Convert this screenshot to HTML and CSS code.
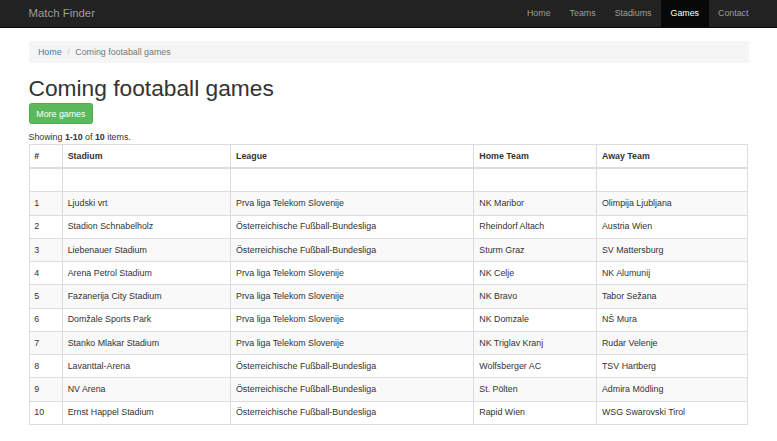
FILE: index.html
```html
<!DOCTYPE html>
<html lang="en">
<head>
<meta charset="utf-8">
<title>Coming footaball games</title>
<link rel="stylesheet" href="styles.css">
</head>
<body>
<nav class="navbar">
  <div class="container nav-inner">
    <a class="brand" href="#">Match Finder</a>
    <ul class="nav">
      <li><a href="#">Home</a></li>
      <li><a href="#">Teams</a></li>
      <li><a href="#">Stadiums</a></li>
      <li class="active"><a href="#">Games</a></li>
      <li><a href="#">Contact</a></li>
    </ul>
  </div>
</nav>
<div class="container page">
  <ul class="breadcrumb">
    <li><a href="#">Home</a></li>
    <li class="active">Coming footaball games</li>
  </ul>
  <h1>Coming footaball games</h1>
  <p class="actions"><a class="btn" href="#">More games</a></p>
  <div class="summary">Showing <b>1-10</b> of <b>10</b> items.</div>
  <table class="grid">
    <colgroup>
      <col class="c-num"><col class="c-stadium"><col class="c-league"><col class="c-home"><col class="c-away">
    </colgroup>
    <thead>
      <tr class="head-row"><th>#</th><th>Stadium</th><th>League</th><th>Home Team</th><th>Away Team</th></tr>
      <tr class="filter-row"><td></td><td></td><td></td><td></td><td></td></tr>
    </thead>
    <tbody>
      <tr><td>1</td><td>Ljudski vrt</td><td>Prva liga Telekom Slovenije</td><td>NK Maribor</td><td>Olimpija Ljubljana</td></tr>
      <tr><td>2</td><td>Stadion Schnabelholz</td><td>Österreichische Fußball-Bundesliga</td><td>Rheindorf Altach</td><td>Austria Wien</td></tr>
      <tr><td>3</td><td>Liebenauer Stadium</td><td>Österreichische Fußball-Bundesliga</td><td>Sturm Graz</td><td>SV Mattersburg</td></tr>
      <tr><td>4</td><td>Arena Petrol Stadium</td><td>Prva liga Telekom Slovenije</td><td>NK Celje</td><td>NK Alumunij</td></tr>
      <tr><td>5</td><td>Fazanerija City Stadium</td><td>Prva liga Telekom Slovenije</td><td>NK Bravo</td><td>Tabor Sežana</td></tr>
      <tr><td>6</td><td>Domžale Sports Park</td><td>Prva liga Telekom Slovenije</td><td>NK Domzale</td><td>NŠ Mura</td></tr>
      <tr><td>7</td><td>Stanko Mlakar Stadium</td><td>Prva liga Telekom Slovenije</td><td>NK Triglav Kranj</td><td>Rudar Velenje</td></tr>
      <tr><td>8</td><td>Lavanttal-Arena</td><td>Österreichische Fußball-Bundesliga</td><td>Wolfsberger AC</td><td>TSV Hartberg</td></tr>
      <tr><td>9</td><td>NV Arena</td><td>Österreichische Fußball-Bundesliga</td><td>St. Pölten</td><td>Admira Mödling</td></tr>
      <tr><td>10</td><td>Ernst Happel Stadium</td><td>Österreichische Fußball-Bundesliga</td><td>Rapid Wien</td><td>WSG Swarovski Tirol</td></tr>
    </tbody>
  </table>
</div>
</body>
</html>
```

FILE: styles.css
```css
html, body {
  margin: 0;
  padding: 0;
  background: #fff;
}
body {
  font-family: "Liberation Sans", Arial, Helvetica, sans-serif;
  font-size: 8.85px;
  line-height: 12.64px;
  color: #333;
}
a {
  color: #337ab7;
  text-decoration: none;
}
.container {
  width: 720px;
  margin: 0 auto;
}

/* Navbar */
.navbar {
  background: #222;
  border-bottom: 1px solid #080808;
  height: 27px;
}
.nav-inner {
  display: flex;
  justify-content: space-between;
  height: 100%;
}
.brand {
  font-size: 11.4px;
  line-height: 27px;
  color: #9d9d9d;
}
.nav {
  display: flex;
  list-style: none;
  margin: 0 -9.5px 0 0;
  padding: 0;
}
.nav a {
  display: block;
  padding: 0 9.5px;
  line-height: 27px;
  color: #9d9d9d;
}
.nav .active a {
  background: #080808;
  color: #fff;
}

/* Page */
.page {
  padding-top: 12.7px;
}
.breadcrumb {
  display: flex;
  list-style: none;
  margin: 0 0 12.64px;
  padding: 5.06px 9.48px;
  background: #f5f5f5;
  border-radius: 2.5px;
}
.breadcrumb li + li::before {
  content: "/\00a0";
  padding: 0 3.16px;
  margin-left: 2.5px;
  color: #ccc;
}
.breadcrumb .active {
  color: #777;
}
h1 {
  font-size: 22.75px;
  line-height: 1.1;
  font-weight: 500;
  margin: 0 0 2.3px;
}
.actions {
  margin: 0 0 6.3px;
}
.btn {
  display: inline-block;
  padding: 3.2px 6.8px;
  font-size: 8.85px;
  line-height: 12.64px;
  color: #fff;
  background: #5cb85c;
  border: 1px solid #4cae4c;
  border-radius: 2.5px;
}
.summary {
  margin-bottom: 0.7px;
}

/* Grid table */
.grid {
  width: 719px;
  table-layout: fixed;
  border-collapse: collapse;
  border: 1px solid #ddd;
}
.c-num { width: 33.4px; }
.c-stadium { width: 168.3px; }
.c-league { width: 243.3px; }
.c-home { width: 122.7px; }
.c-away { width: 151.3px; }
.grid th,
.grid td {
  padding: 4.8px;
  border: 1px solid #ddd;
  text-align: left;
  vertical-align: top;
  height: 12.64px;
  white-space: nowrap;
  overflow: hidden;
}
.grid th {
  font-weight: bold;
  border-bottom-width: 2px;
}
.grid tbody tr:nth-child(odd) {
  background: #f9f9f9;
}
```
